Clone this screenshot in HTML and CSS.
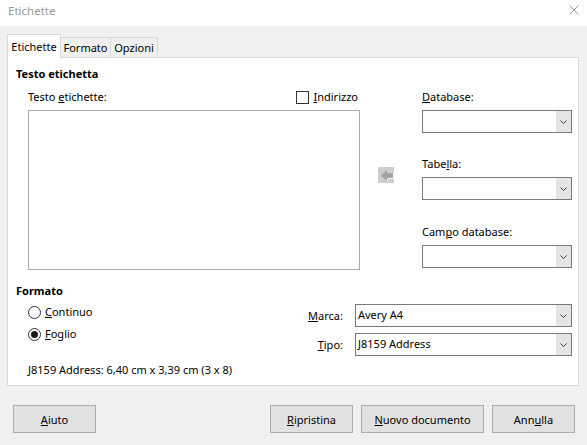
FILE: index.html
```html
<!DOCTYPE html>
<html lang="it">
<head>
<meta charset="utf-8">
<title>Etichette</title>
<link rel="stylesheet" href="styles.css">
</head>
<body>
<div class="titlebar">
  <span class="title">Etichette</span>
  <svg class="close" width="10" height="10" viewBox="0 0 10 10"><path d="M0.5 0.5 L9.5 9.5 M9.5 0.5 L0.5 9.5" stroke="#9a9a9a" stroke-width="1" fill="none"/></svg>
</div>
<div class="content">
  <div class="tabs">
    <div class="tab tab-active tab-1">Etichette</div>
    <div class="tab tab-2">Formato</div>
    <div class="tab tab-3">Opzioni</div>
  </div>
  <div class="panel">
    <div class="heading">Testo etichetta</div>
    <div class="text-row">
      <div class="text-col">
        <div class="label-row">
          <span>Testo <u>e</u>tichette:</span>
          <span class="check"><span class="box"></span><span><u>I</u>ndirizzo</span></span>
        </div>
        <div class="textarea"></div>
      </div>
      <div class="arrow-col">
        <svg class="arrow" width="16" height="16" viewBox="0 0 16 16">
          <rect width="16" height="16" fill="#cdcdcd"/>
          <polygon points="3,8.5 9,3 9,6 15,6 15,11 9,11 9,14" fill="#a3a3a3"/>
          <polyline points="9.5,14.5 9.5,11.5 15.5,11.5 15.5,5.5" stroke="#f4f4f4" stroke-width="1" fill="none"/>
        </svg>
      </div>
      <div class="db-col">
        <div class="db-label"><u>D</u>atabase:</div>
        <div class="combo"><span class="val"></span><span class="btn"><svg width="7" height="4" viewBox="0 0 7 4"><path d="M0.5 0.5 L3.5 3.5 L6.5 0.5" stroke="#3c3c3c" fill="none"/></svg></span></div>
        <div class="db-label db-label-2">Tabe<u>l</u>la:</div>
        <div class="combo"><span class="val"></span><span class="btn"><svg width="7" height="4" viewBox="0 0 7 4"><path d="M0.5 0.5 L3.5 3.5 L6.5 0.5" stroke="#3c3c3c" fill="none"/></svg></span></div>
        <div class="db-label db-label-3">Cam<u>p</u>o database:</div>
        <div class="combo"><span class="val"></span><span class="btn"><svg width="7" height="4" viewBox="0 0 7 4"><path d="M0.5 0.5 L3.5 3.5 L6.5 0.5" stroke="#3c3c3c" fill="none"/></svg></span></div>
      </div>
    </div>
    <div class="heading heading-2">Formato</div>
    <div class="format-row">
      <div class="radios">
        <div class="radio"><span class="circle"></span><span><u>C</u>ontinuo</span></div>
        <div class="radio radio-checked"><span class="circle"></span><span><u>F</u>oglio</span></div>
      </div>
      <div class="brand-grid">
        <span class="glabel"><u>M</u>arca:</span>
        <div class="combo"><span class="val">Avery A4</span><span class="btn"><svg width="7" height="4" viewBox="0 0 7 4"><path d="M0.5 0.5 L3.5 3.5 L6.5 0.5" stroke="#3c3c3c" fill="none"/></svg></span></div>
        <span class="glabel"><u>T</u>ipo:</span>
        <div class="combo"><span class="val">J8159 Address</span><span class="btn"><svg width="7" height="4" viewBox="0 0 7 4"><path d="M0.5 0.5 L3.5 3.5 L6.5 0.5" stroke="#3c3c3c" fill="none"/></svg></span></div>
      </div>
    </div>
    <div class="info">J8159 Address: 6,40 cm x 3,39 cm (3 x 8)</div>
  </div>
  <div class="buttons">
    <button class="button"><u>A</u>iuto</button>
    <span class="spacer"></span>
    <button class="button"><u>R</u>ipristina</button>
    <button class="button button-wide"><u>N</u>uovo documento</button>
    <button class="button">Ann<u>u</u>lla</button>
  </div>
</div>
</body>
</html>
```
FILE: styles.css
```css
* { box-sizing: border-box; }
html, body { margin: 0; padding: 0; }
body {
  width: 587px;
  height: 445px;
  overflow: hidden;
  background: #f0f0f0;
  color: #000;
  font-family: "Noto Sans", "Open Sans", sans-serif;
  font-size: 11px;
  line-height: 16px;
}
u { text-decoration: underline; text-underline-offset: 1px; }

.titlebar {
  height: 26px;
  background: #fff;
  display: flex;
  justify-content: space-between;
  align-items: flex-start;
  padding: 3px 8px 0 8px;
  color: #9a9a9a;
  font-size: 11.5px;
}
.close { margin-top: 2px; }

.content { padding: 8px 8px 0 7px; }

.tabs {
  display: flex;
  align-items: flex-end;
  height: 23px;
}
.tab {
  height: 20px;
  border: 1px solid #d9d9d9;
  border-bottom: none;
  border-left: none;
  background: #f0f0f0;
  padding-top: 2px;
  text-align: center;
}
.tab-active {
  height: 24px;
  margin-bottom: -1px;
  border-left: 1px solid #d9d9d9;
  background: #fff;
  padding-top: 4px;
  position: relative;
  z-index: 1;
}
.tab-1 { width: 54px; }
.tab-2 { width: 50px; }
.tab-3 { width: 47px; }

.panel {
  height: 329px;
  border: 1px solid #d9d9d9;
  background: #fff;
  padding: 8px 6px 0 8px;
}
.heading { font-weight: bold; height: 16px; }
.heading-2 { margin-top: 13px; }

.text-row { display: flex; margin-top: 7px; }
.text-col { margin-left: 12px; width: 332px; }
.label-row {
  display: flex;
  justify-content: space-between;
  height: 16px;
  padding-right: 2px;
}
.check { display: flex; align-items: center; gap: 4px; }
.box {
  width: 13px;
  height: 13px;
  border: 1px solid #333;
  background: #fff;
}
.textarea {
  margin-top: 5px;
  height: 160px;
  border: 1px solid #ababab;
  background: #fff;
}
.arrow-col { width: 62px; padding: 78px 0 0 18px; }
.arrow { display: block; }
.db-col { width: 150px; }
.db-label { height: 16px; margin-bottom: 5px; }
.db-label-2 { margin-top: 23px; }
.db-label-3 { margin-top: 24px; }

.combo {
  display: flex;
  height: 23px;
  border: 1px solid #7a7a7a;
  background: #fff;
}
.val { flex: 1; padding-left: 2px; line-height: 20px; white-space: nowrap; }
.btn {
  width: 15px;
  background: #e5e5e5;
  display: flex;
  align-items: center;
  justify-content: center;
}
.btn svg { display: block; }

.format-row { display: flex; margin-top: 5px; }
.radios {
  margin-left: 12px;
  display: flex;
  flex-direction: column;
  gap: 6px;
}
.radio { display: flex; align-items: center; gap: 4px; height: 16px; }
.circle {
  width: 13px;
  height: 13px;
  border: 1px solid #333;
  border-radius: 50%;
  background: #fff;
  display: flex;
  align-items: center;
  justify-content: center;
}
.radio-checked .circle::after {
  content: "";
  width: 7px;
  height: 7px;
  border-radius: 50%;
  background: #1a1a1a;
}
.brand-grid {
  margin-left: auto;
  display: grid;
  grid-template-columns: auto 217px;
  column-gap: 12px;
  row-gap: 6px;
  align-items: center;
}
.glabel { text-align: right; }

.info { margin-top: 6px; margin-left: 12px; height: 16px; }

.buttons {
  display: flex;
  gap: 8px;
  margin: 19px 4px 0 6px;
}
.spacer { flex: 1; }
.button {
  height: 28px;
  width: 83px;
  border: 1px solid #adadad;
  background: #e1e1e1;
  font: inherit;
  color: #000;
  padding: 2px 0 0 0;
}
.button-wide { width: 123px; }
```
